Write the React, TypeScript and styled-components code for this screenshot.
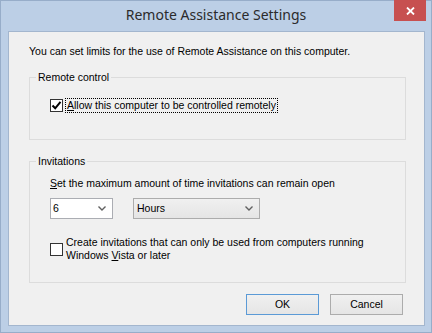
import React from "react";
import styled, { createGlobalStyle } from "styled-components";

const Global = createGlobalStyle`
  html, body { margin: 0; padding: 0; background: #fff; }
  body { font-family: "Liberation Sans", Arial, sans-serif; }
  * { box-sizing: border-box; }
`;

const Window = styled.div`
  width: 432px;
  height: 333px;
  display: flex;
  flex-direction: column;
  background: #bccfe6;
  border: 1px solid #97adc9;
`;

const TitleBar = styled.div`
  height: 30px;
  display: grid;
  grid-template-columns: 1fr auto 1fr;
  align-items: start;
`;

const Title = styled.div`
  font-family: "Noto Sans", "Open Sans", sans-serif;
  font-size: 14px;
  line-height: 20px;
  color: #2b2b2b;
  padding-top: 4px;
  white-space: nowrap;
`;

const TitleControls = styled.div`
  display: flex;
  justify-content: flex-end;
  padding-right: 5px;
  margin-top: -1px;
`;

const CloseButton = styled.div`
  width: 32px;
  height: 21px;
  background: #c75050;
  display: flex;
  align-items: center;
  justify-content: center;
`;

const Client = styled.div`
  flex: 1;
  margin: 0 6px 6px 7px;
  background: #f0f0f0;
  border: 1px solid #a3b6ce;
  padding: 13px 18px 0 20px;
  display: flex;
  flex-direction: column;
  font-size: 10.5px;
  line-height: 13px;
  color: #000;
`;

const Text = styled.div`
  white-space: nowrap;
`;

const GroupBox = styled.div<{ $height: number; $mt: number }>`
  position: relative;
  height: ${(p) => p.$height}px;
  margin-top: ${(p) => p.$mt}px;
  border: 1px solid #dcdcdc;
  display: flex;
  flex-direction: column;
  align-items: flex-start;
`;

const Legend = styled.div`
  position: absolute;
  top: -7px;
  left: 6px;
  padding: 0 2px;
  background: #f0f0f0;
`;

const GroupBody = styled.div<{ $pt: number }>`
  padding: ${(p) => p.$pt}px 0 0 20px;
  display: flex;
  flex-direction: column;
  align-items: flex-start;
`;

const CheckRow = styled.div<{ $mt?: number }>`
  display: flex;
  align-items: center;
  margin-top: ${(p) => p.$mt ?? 0}px;
`;

const Box = styled.div`
  width: 13px;
  height: 13px;
  border: 1px solid #333;
  background: #fff;
  flex: none;
  display: flex;
  align-items: center;
  justify-content: center;
`;

const FocusLabel = styled.div`
  margin-left: 2px;
  padding: 0 1px;
  border: 1px dotted #000;
  white-space: nowrap;
`;

const CheckLabel = styled.div`
  margin-left: 3px;
  white-space: nowrap;
`;

const ComboRow = styled.div`
  display: flex;
  gap: 20px;
  margin-top: 8px;
`;

const Combo = styled.div<{ $width: number; $editable?: boolean }>`
  width: ${(p) => p.$width}px;
  height: 21px;
  border: 1px solid ${(p) => (p.$editable ? "#abadb3" : "#acacac")};
  background: ${(p) =>
    p.$editable ? "#fff" : "linear-gradient(#f0f0f0, #e5e5e5)"};
  display: flex;
  align-items: center;
  justify-content: space-between;
  padding: 0 6px 0 ${(p) => (p.$editable ? 2 : 3)}px;
`;

const ButtonRow = styled.div`
  display: flex;
  justify-content: flex-end;
  gap: 11px;
  margin-top: 11px;
  padding-right: 3px;
`;

const Button = styled.div<{ $default?: boolean }>`
  width: 73px;
  height: 21px;
  border: 1px solid ${(p) => (p.$default ? "#5b9ad6" : "#acacac")};
  background: linear-gradient(#f0f0f0, #e5e5e5);
  display: flex;
  align-items: center;
  justify-content: center;
`;

const Chevron = () => (
  <svg width="8" height="5" viewBox="0 0 8 5">
    <polyline points="0.5,0.5 4,4 7.5,0.5" fill="none" stroke="#606060" strokeWidth="1.4" />
  </svg>
);

const Check = () => (
  <svg width="11" height="11" viewBox="0 0 11 11">
    <polyline points="1.5,5.5 4.2,8.3 9.5,1.8" fill="none" stroke="#000" strokeWidth="2" />
  </svg>
);

export default function App() {
  return (
    <>
      <Global />
      <Window>
        <TitleBar>
          <span />
          <Title>Remote Assistance Settings</Title>
          <TitleControls>
            <CloseButton>
              <svg width="9" height="8" viewBox="0 0 9 8">
                <path d="M1 0.5 L8 7.5 M8 0.5 L1 7.5" stroke="#fff" strokeWidth="1.8" />
              </svg>
            </CloseButton>
          </TitleControls>
        </TitleBar>
        <Client>
          <Text>You can set limits for the use of Remote Assistance on this computer.</Text>
          <GroupBox $height={63} $mt={19}>
            <Legend>Remote control</Legend>
            <GroupBody $pt={20}>
              <CheckRow>
                <Box>
                  <Check />
                </Box>
                <FocusLabel>
                  <u>A</u>llow this computer to be controlled remotely
                </FocusLabel>
              </CheckRow>
            </GroupBody>
          </GroupBox>
          <GroupBox $height={122} $mt={21}>
            <Legend>Invitations</Legend>
            <GroupBody $pt={15}>
              <Text>
                <u>S</u>et the maximum amount of time invitations can remain open
              </Text>
              <ComboRow>
                <Combo $width={63} $editable>
                  <span>6</span>
                  <Chevron />
                </Combo>
                <Combo $width={127}>
                  <span>Hours</span>
                  <Chevron />
                </Combo>
              </ComboRow>
              <CheckRow $mt={17}>
                <Box />
                <CheckLabel>
                  Create invitations that can only be used from computers running
                  <br />
                  Windows <u>V</u>ista or later
                </CheckLabel>
              </CheckRow>
            </GroupBody>
          </GroupBox>
          <ButtonRow>
            <Button $default>OK</Button>
            <Button>Cancel</Button>
          </ButtonRow>
        </Client>
      </Window>
    </>
  );
}
